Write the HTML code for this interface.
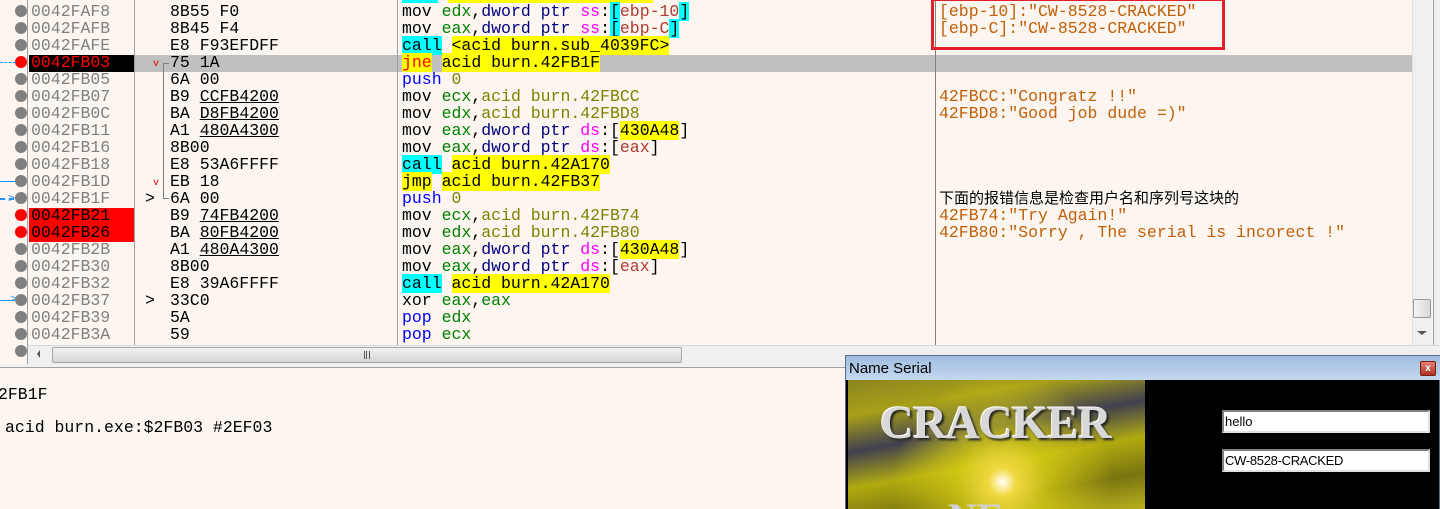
<!DOCTYPE html>
<html><head><meta charset="utf-8"><style>
*{margin:0;padding:0;box-sizing:border-box}
html{overflow:hidden;width:1440px;height:509px}
body{width:1440px;height:509px;overflow:hidden;background:#fdf6f0;position:relative;font-family:"Liberation Mono","DejaVu Sans Mono",monospace;font-size:16.5px}
.a{position:absolute;white-space:pre;line-height:17px}
.g{color:#808080}
.k{color:#000}
.r{color:#008000}
.n{color:#000080}
.m{color:#ff00ff}
.o{color:#808000}
.b{color:#0000ff}
.br{color:#b03a2e}
.c{background:#00ffff}
.y{background:#ffff00}
.cm{color:#c0600a}
.u{text-decoration:underline}
.dot{position:absolute;left:15px;width:12px;height:12px;border-radius:50%;background:#808080}
.vl{position:absolute;width:1px;background:#808080}
</style></head><body>
<!-- top partial row -->
<div style="position:absolute;left:402px;top:0;width:36px;height:3px;background:#00ffff"></div>
<div style="position:absolute;left:448px;top:0;width:205px;height:3px;background:#ffff00"></div>
<!-- selected row -->
<div style="position:absolute;left:135px;top:55px;width:1277px;height:17px;background:#c0c0c0"></div>
<div style="position:absolute;left:29px;top:55px;width:105px;height:17px;background:#000"></div>
<div style="position:absolute;left:29px;top:208px;width:105px;height:34px;background:#ff0000"></div>
<!-- separators -->
<div class="vl" style="left:27px;top:0;height:364px;background:#a0a0a0"></div>
<div class="vl" style="left:134px;top:0;height:345px;background:#a0a0a0"></div>
<div class="vl" style="left:397px;top:0;height:345px;background:#a0a0a0"></div>
<div class="vl" style="left:935px;top:0;height:345px;background:#808080"></div>
<!-- dots -->
<div class="dot" style="top:5px"></div><div class="dot" style="top:22px"></div><div class="dot" style="top:39px"></div>
<div class="dot" style="top:56px;background:#ff0000"></div>
<div class="dot" style="top:73px"></div><div class="dot" style="top:90px"></div><div class="dot" style="top:107px"></div><div class="dot" style="top:124px"></div><div class="dot" style="top:141px"></div><div class="dot" style="top:158px"></div><div class="dot" style="top:175px"></div><div class="dot" style="top:192px"></div>
<div class="dot" style="top:209px;background:#ff0000"></div><div class="dot" style="top:226px;background:#ff0000"></div>
<div class="dot" style="top:243px"></div><div class="dot" style="top:260px"></div><div class="dot" style="top:277px"></div><div class="dot" style="top:294px"></div><div class="dot" style="top:311px"></div><div class="dot" style="top:328px"></div><div class="dot" style="top:345px"></div>
<!-- left arrows -->
<div style="position:absolute;left:0;top:62px;width:16px;border-top:1px dashed #1e90ff"></div>
<div style="position:absolute;left:0;top:181px;width:15px;border-top:1px solid #1e90ff"></div>
<div style="position:absolute;left:0;top:198px;width:14px;border-top:2px dashed #1e90ff"></div>
<div style="position:absolute;left:8px;top:193px;color:#1e90ff;font-size:12px;line-height:12px">&gt;</div>
<div style="position:absolute;left:0;top:300px;width:15px;border-top:1px solid #1e90ff"></div>
<div style="position:absolute;left:10px;top:295px;color:#1e90ff;font-size:11px;line-height:11px">&gt;</div>
<!-- branch line -->
<div style="position:absolute;left:163px;top:63px;width:6px;height:136px;border-left:1px solid #808080;border-top:1px solid #808080"></div>
<div style="position:absolute;left:163px;top:198px;width:6px;border-top:1px solid #808080"></div>
<div class="a" style="left:153px;top:56px;color:#e00000;font-size:10px">v</div>
<div class="a" style="left:153px;top:175px;color:#e00000;font-size:10px">v</div>
<div class="a" style="left:145px;top:190px">&gt;</div>
<div class="a" style="left:145px;top:292px">&gt;</div>

<!-- address column -->
<div class="a g" style="left:31px;top:3px">0042FAF8
0042FAFB
0042FAFE
<span style="color:#ff0000">0042FB03</span>
0042FB05
0042FB07
0042FB0C
0042FB11
0042FB16
0042FB18
0042FB1D
0042FB1F
<span class="k">0042FB21</span>
<span class="k">0042FB26</span>
0042FB2B
0042FB30
0042FB32
0042FB37
0042FB39
0042FB3A</div>
<!-- bytes -->
<div class="a k" style="left:170px;top:3px">8B55 F0
8B45 F4
E8 F93EFDFF
75 1A
6A 00
B9 <span class="u">CCFB4200</span>
BA <span class="u">D8FB4200</span>
A1 <span class="u">480A4300</span>
8B00
E8 53A6FFFF
EB 18
6A 00
B9 <span class="u">74FB4200</span>
BA <span class="u">80FB4200</span>
A1 <span class="u">480A4300</span>
8B00
E8 39A6FFFF
33C0
5A
59</div>
<!-- disasm -->
<div class="a k" style="left:402px;top:3px">mov <span class="r">edx</span>,<span class="n">dword ptr</span> <span class="m">ss</span>:<span class="c">[</span><span class="br">ebp-10</span><span class="c">]</span>
mov <span class="r">eax</span>,<span class="n">dword ptr</span> <span class="m">ss</span>:<span class="c">[</span><span class="br">ebp-C</span><span class="c">]</span>
<span class="c">call</span> <span class="y">&lt;acid burn.sub_4039FC&gt;</span>
<span class="y" style="color:#ff0000">jne</span> <span class="y">acid burn.42FB1F</span>
<span class="b">push</span> <span class="o">0</span>
mov <span class="r">ecx</span>,<span class="o">acid burn.42FBCC</span>
mov <span class="r">edx</span>,<span class="o">acid burn.42FBD8</span>
mov <span class="r">eax</span>,<span class="n">dword ptr</span> <span class="m">ds</span>:[<span class="y">430A48</span>]
mov <span class="r">eax</span>,<span class="n">dword ptr</span> <span class="m">ds</span>:[<span class="br">eax</span>]
<span class="c">call</span> <span class="y">acid burn.42A170</span>
<span class="y">jmp</span> <span class="y">acid burn.42FB37</span>
<span class="b">push</span> <span class="o">0</span>
mov <span class="r">ecx</span>,<span class="o">acid burn.42FB74</span>
mov <span class="r">edx</span>,<span class="o">acid burn.42FB80</span>
mov <span class="r">eax</span>,<span class="n">dword ptr</span> <span class="m">ds</span>:[<span class="y">430A48</span>]
mov <span class="r">eax</span>,<span class="n">dword ptr</span> <span class="m">ds</span>:[<span class="br">eax</span>]
<span class="c">call</span> <span class="y">acid burn.42A170</span>
xor <span class="r">eax</span>,<span class="r">eax</span>
<span class="b">pop</span> <span class="r">edx</span>
<span class="b">pop</span> <span class="r">ecx</span></div>
<!-- comments -->
<div class="a cm" style="left:939px;top:3px">[ebp-10]:"CW-8528-CRACKED"
[ebp-C]:"CW-8528-CRACKED"



42FBCC:"Congratz !!"
42FBD8:"Good job dude =)"</div>
<div class="a k" style="left:939px;top:190px;font-family:'Liberation Sans','Noto Sans CJK SC',sans-serif;font-size:15px">下面的报错信息是检查用户名和序列号这块的</div>
<div class="a cm" style="left:939px;top:207px">42FB74:"Try Again!"
42FB80:"Sorry , The serial is incorect !"</div>
<div style="position:absolute;left:931px;top:-2px;width:294px;height:52px;border:3px solid #e0202a"></div>
<!-- vertical scrollbar -->
<div style="position:absolute;left:1412px;top:0;width:20px;height:345px;background:#f0f0f0;border-left:1px solid #e0e0e0"></div>
<div style="position:absolute;left:1413px;top:299px;width:18px;height:19px;background:linear-gradient(90deg,#f4f4f4,#d8d8d8);border:1px solid #9a9a9a;border-radius:2px"></div>
<div style="position:absolute;left:1417px;top:331px;border-left:5px solid transparent;border-right:5px solid transparent;border-top:4px solid #555"></div>
<div style="position:absolute;left:1433px;top:0;width:7px;height:364px;background:#f0f0f0;border-left:1px solid #a0a0a0"></div>
<!-- horizontal scrollbar -->
<div style="position:absolute;left:28px;top:345px;width:1412px;height:20px;background:#f0f0f0;border-top:1px solid #d8d8d8"></div>
<div style="position:absolute;left:37px;top:350px;border-top:4px solid transparent;border-bottom:4px solid transparent;border-right:3px solid #555"></div>
<div style="position:absolute;left:52px;top:347px;width:630px;height:16px;background:linear-gradient(#f0f0f0,#d6d6d6);border:1px solid #a8a8a8;border-radius:2px"></div>
<div style="position:absolute;left:364px;top:351px;width:6px;height:8px;border-left:1px solid #555;border-right:1px solid #555"></div>
<div style="position:absolute;left:366px;top:351px;width:1px;height:8px;background:#555"></div>
<div style="position:absolute;left:0;top:364px;width:1440px;height:4px;background:#f0f0f0;border-bottom:1px solid #a0a0a0"></div>
<!-- bottom text -->
<div class="a k" style="left:-2px;top:386px;font-size:16.5px">2FB1F</div>
<div class="a k" style="left:5px;top:419px;font-size:16.5px">acid burn.exe:$2FB03 #2EF03</div>
<!-- Name Serial window -->
<div style="position:absolute;left:845px;top:355px;width:595px;height:154px;background:#000;border:1px solid #5a6a80;border-bottom:none"></div>
<div style="position:absolute;left:846px;top:356px;width:594px;height:24px;background:linear-gradient(#9fbce0,#c5d9ef)"></div>
<div style="position:absolute;left:849px;top:360px;font-family:'Liberation Sans',sans-serif;font-size:15px;line-height:18px;color:#000">Name Serial</div>
<div style="position:absolute;left:1420px;top:361px;width:16px;height:15px;background:linear-gradient(#e08070,#b03020);border:1px solid #7a2010;border-radius:2px;color:#fff;font:bold 10px 'Liberation Sans',sans-serif;text-align:center;line-height:13px">x</div>
<div style="position:absolute;left:848px;top:380px;width:297px;height:129px;overflow:hidden;background:
radial-gradient(circle at 52% 79%,#fff 0,#fff4c0 4px,#f0d840 14px,rgba(220,210,20,0.7) 45px,rgba(0,0,0,0) 110px),
linear-gradient(170deg,#8a8420 0%,#a8a018 20%,#404050 40%,#b0aa10 60%,#7a7410 80%,#b8b020 100%)">
<div style="position:absolute;left:32px;top:18px;font-family:'Liberation Serif',serif;font-weight:bold;font-size:47px;line-height:50px;color:#d8d8d8;text-shadow:2px 2px 2px #222,-1px -1px 0 #fff;letter-spacing:-1px">CRACKER</div>
<div style="position:absolute;left:100px;top:118px;font-family:'Liberation Serif',serif;font-weight:bold;font-size:40px;line-height:40px;color:#d0d0d0">NE</div>
</div>
<div style="position:absolute;left:1222px;top:410px;width:208px;height:23px;background:#fff;border:2px solid;border-color:#808080 #e0e0e0 #e0e0e0 #808080;font-family:'Liberation Sans',sans-serif;font-size:13px;line-height:19px;padding-left:1px">hello</div>
<div style="position:absolute;left:1222px;top:449px;width:208px;height:23px;background:#fff;border:2px solid;border-color:#808080 #e0e0e0 #e0e0e0 #808080;font-family:'Liberation Sans',sans-serif;font-size:13px;line-height:19px;padding-left:1px;letter-spacing:-0.3px">CW-8528-CRACKED</div>
</body></html>
